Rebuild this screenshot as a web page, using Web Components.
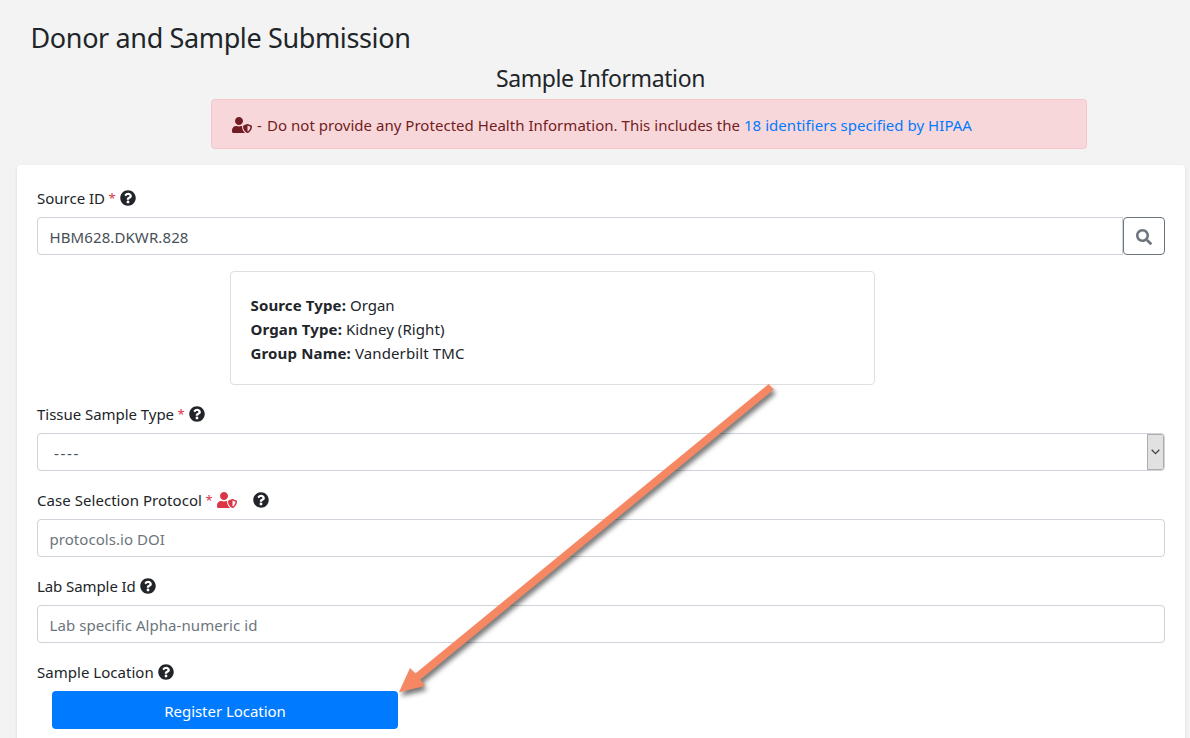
<!DOCTYPE html>
<html lang="en">
<head>
<meta charset="utf-8">
<title>Donor and Sample Submission</title>
<style>
html,body{margin:0;height:100%;overflow:hidden}
body{background:#f3f3f3;color:#212529;font:15px/24px "Noto Sans","Open Sans",sans-serif}
</style>
</head>
<body>
<submission-page></submission-page>
<script>
const define = (name, html, setup) => {
  const t = document.createElement('template');
  t.innerHTML = html;
  customElements.define(name, class extends HTMLElement {
    connectedCallback() {
      if (this.shadowRoot) return;
      this.attachShadow({ mode: 'open' }).append(t.content.cloneNode(true));
      if (setup) setup(this, this.shadowRoot);
    }
  });
};

/* Text set to a fixed measure by distributing tracking over its letters. */
define('fit-text', `<style>:host{display:inline-block;white-space:pre;flex:none}span{display:inline-block}</style><span><slot></slot></span>`, (el, root) => {
  const span = root.querySelector('span'), w = +el.getAttribute('w');
  const n = el.textContent.length;
  span.style.letterSpacing = (w - span.getBoundingClientRect().width) / n + 'px';
  el.style.width = w + 'px';
});

const ICONS = {
  help: [512, 'M504 256c0 136.997-111.043 248-248 248S8 392.997 8 256C8 119.083 119.043 8 256 8s248 111.083 248 248zM262.655 90c-54.497 0-89.255 22.957-116.549 63.758-3.536 5.286-2.353 12.415 2.715 16.258l34.699 26.31c5.205 3.947 12.621 3.008 16.665-2.122 17.864-22.658 30.113-35.797 57.303-35.797 20.429 0 45.698 13.148 45.698 32.958 0 14.976-12.363 22.667-32.534 33.976C247.128 238.528 216 254.941 216 296v4c0 6.627 5.373 12 12 12h56c6.627 0 12-5.373 12-12v-1.333c0-28.462 83.186-29.647 83.186-106.667 0-58.002-60.165-102-116.531-102zM256 338c-25.365 0-46 20.635-46 46 0 25.364 20.635 46 46 46s46-20.636 46-46c0-25.365-20.635-46-46-46z'],
  shield: [640, 'M622.3 271.1l-115.2-45c-4.1-1.6-12.6-3.7-22.2 0l-115.2 45c-10.7 4.2-17.7 14-17.7 24.9 0 111.6 68.7 188.8 132.9 213.9 9.6 3.7 18 1.6 22.2 0C558.4 489.9 640 420.5 640 296c0-10.9-7-20.7-17.7-24.9zM496 462.4V273.3l95.5 37.3c-5.6 87.1-60.9 135.4-95.5 151.8zM224 256c70.7 0 128-57.3 128-128S294.7 0 224 0 96 57.3 96 128s57.3 128 128 128zm96 40c0-2.5.8-4.8 1.1-7.2-2.5-.1-4.9-.8-7.5-.8h-16.7c-22.2 10.2-46.9 16-72.9 16s-50.6-5.8-72.9-16h-16.7C60.2 288 0 348.2 0 422.4V464c0 26.5 21.5 48 48 48h352c6.8 0 13.3-1.5 19.2-4-54-42.9-99.2-116.7-99.2-212z'],
  search: [512, 'M505 442.7L405.3 343c-4.5-4.5-10.6-7-17-7H372c27.6-35.3 44-79.7 44-128C416 93.1 322.9 0 208 0S0 93.1 0 208s93.1 208 208 208c48.3 0 92.7-16.4 128-44v16.3c0 6.4 2.5 12.5 7 17l99.7 99.7c9.4 9.4 24.6 9.4 33.9 0l28.3-28.3c9.4-9.4 9.4-24.6.1-34zM208 336c-70.7 0-128-57.2-128-128 0-70.7 57.2-128 128-128 70.7 0 128 57.2 128 128 0 70.7-57.2 128-128 128z']
};
define('ui-icon', `<style>:host{display:block;flex:none}svg{display:block;height:16px;fill:currentColor}</style><svg><path/></svg>`, (el, root) => {
  const [w, d] = ICONS[el.getAttribute('name')], svg = root.querySelector('svg');
  svg.setAttribute('viewBox', `0 0 ${w} 512`);
  svg.style.width = w / 32 + 'px';
  root.querySelector('path').setAttribute('d', d);
});

define('req-mark', `<style>:host{display:block;width:7px;margin:0 4px 0 -.5px;color:#dc3545;font-size:13px}</style>*`);

define('form-field', `<style>
:host{display:block;margin-bottom:16px}
.label{display:flex;align-items:center;height:24px;padding-top:1px;margin-bottom:7px}
</style><div class="label"><slot name="label"></slot></div><slot></slot>`);

define('text-box', `<style>
:host{display:flex;box-sizing:border-box;flex:1;height:38px;padding:7px 0 5px 11.5px;border:1px solid #ced4da;border-radius:4px;background:#fff;color:#495057}
:host([placeholder]){color:#6c757d}
:host([joined]){border-radius:4px 0 0 4px}
</style><slot></slot>`);

define('select-box', `<style>
:host{display:flex;justify-content:space-between;box-sizing:border-box;height:38px;border:1px solid #ced4da;border-radius:4px;color:#495057;background:#fff;overflow:hidden}
.value{padding:7px 0 0 16px}
.drop{box-sizing:border-box;width:17px;border:1px solid #adadad;background:#e1e1e1;display:flex;align-items:center;justify-content:center}
svg{display:block}
</style><div class="value"><slot></slot></div><div class="drop"><svg width="9" height="6" viewBox="0 0 9 6" fill="none" stroke="#444" stroke-width="1.3"><path d="M.7 .8 4.5 4.6 8.3 .8"/></svg></div>`);

define('search-button', `<style>
:host{display:flex;box-sizing:border-box;width:42px;height:38px;align-items:center;justify-content:center;padding-top:2px;border:1px solid #6c757d;border-radius:4px;color:#6c757d}
</style><ui-icon name="search"></ui-icon>`);

define('phi-alert', `<style>
:host{display:flex;box-sizing:border-box;width:876px;height:50px;margin-left:211px;padding:1px 20px 0;align-items:center;border:1px solid #f5c6cb;border-radius:4px;background:#f8d7da;color:#721c24}
ui-icon{margin-right:5px}
a{color:#007bff;text-decoration:none;margin-left:4px}
</style><ui-icon name="shield"></ui-icon><fit-text w="10">- </fit-text><fit-text w="473">Do not provide any Protected Health Information. This includes the</fit-text><a><fit-text w="228">18 identifiers specified by HIPAA</fit-text></a>`);

define('source-card', `<style>
:host{display:block;box-sizing:border-box;width:645px;height:114px;margin:16px 0 16px 193px;padding:21px 19.5px 0;border:1px solid #dfdfdf;border-radius:4px;background:#fff}
div{display:flex;gap:4px;height:24px}b{font-weight:700;display:flex}
</style>
<div><b><fit-text w="95.5">Source Type:</fit-text></b><fit-text w="44.5">Organ</fit-text></div>
<div><b><fit-text w="91.5">Organ Type:</fit-text></b><fit-text w="98.5">Kidney (Right)</fit-text></div>
<div><b><fit-text w="100.5">Group Name:</fit-text></b><fit-text w="109.5">Vanderbilt TMC</fit-text></div>`);

define('primary-button', `<style>
:host{display:flex;box-sizing:border-box;justify-content:center;width:346px;height:38px;margin-left:15px;padding-top:8px;border-radius:4px;background:#007bff;color:#fff}
</style><slot></slot>`);

define('pointer-arrow', `<style>
:host{position:absolute;left:380px;top:370px;width:410px;height:340px;pointer-events:none}
svg{display:block;filter:drop-shadow(2px 4px 2.5px rgba(0,0,0,.55))}
</style><svg width="410" height="340" viewBox="380 370 410 340"><path fill="#f58763" d="M399 692.3 410 668 415.4 673.6 768.7 384 773.7 389.5 420.4 679.4 425 686z"/></svg>`);

define('submission-page', `<style>
:host{display:block;position:relative;height:738px;overflow:hidden}
h1,h2{font-weight:400;margin:0}
h1{font-size:27px;line-height:34px;padding:21px 0 0 30.5px;height:34px}
h2{font-size:23px;line-height:29px;height:29px;padding:9px 0 6px 496px}
main{box-sizing:border-box;width:1168px;height:600px;margin:16px 0 0 17px;padding:20px;background:#fff;border-radius:4px;box-shadow:0 1px 3px rgba(0,0,0,.12)}
.row{display:flex}
.gap{margin-right:4px}
ui-icon[name=shield]{color:#dc3545;margin-right:16px}
</style>
<h1><fit-text w="380">Donor and Sample Submission</fit-text></h1>
<h2><fit-text w="209">Sample Information</fit-text></h2>
<phi-alert></phi-alert>
<main>
<form-field><fit-text slot="label" class="gap" w="68">Source ID</fit-text><req-mark slot="label"></req-mark><ui-icon slot="label" name="help"></ui-icon>
<div class="row"><text-box joined><fit-text w="139">HBM628.DKWR.828</fit-text></text-box><search-button></search-button></div>
<source-card></source-card></form-field>
<form-field><fit-text slot="label" class="gap" w="137">Tissue Sample Type</fit-text><req-mark slot="label"></req-mark><ui-icon slot="label" name="help"></ui-icon>
<select-box><fit-text w="26">----</fit-text></select-box></form-field>
<form-field><fit-text slot="label" class="gap" w="165">Case Selection Protocol</fit-text><req-mark slot="label"></req-mark><ui-icon slot="label" name="shield"></ui-icon><ui-icon slot="label" name="help"></ui-icon>
<text-box placeholder><fit-text w="115.5">protocols.io DOI</fit-text></text-box></form-field>
<form-field><fit-text slot="label" class="gap" w="98.7">Lab Sample Id</fit-text><ui-icon slot="label" name="help"></ui-icon>
<text-box placeholder><fit-text w="208">Lab specific Alpha-numeric id</fit-text></text-box></form-field>
<form-field><fit-text slot="label" class="gap" w="116.7">Sample Location</fit-text><ui-icon slot="label" name="help"></ui-icon>
<primary-button><fit-text w="121.5">Register Location</fit-text></primary-button></form-field>
</main>
<pointer-arrow></pointer-arrow>`);
</script>
</body>
</html>
